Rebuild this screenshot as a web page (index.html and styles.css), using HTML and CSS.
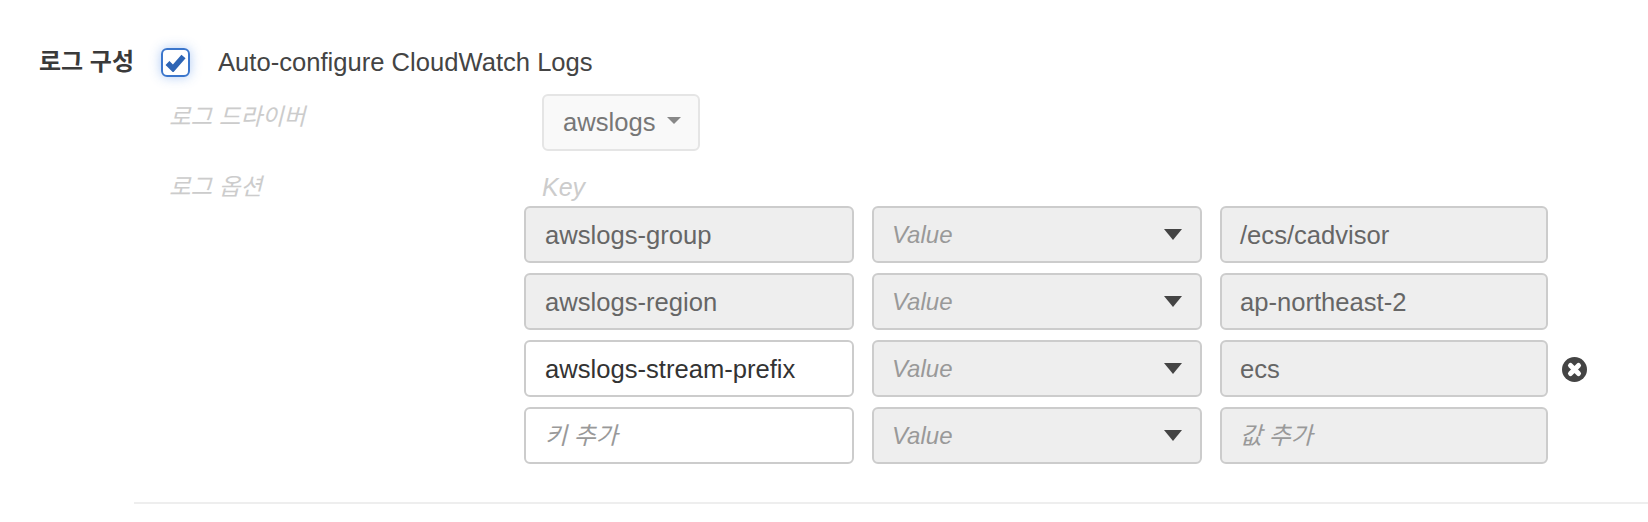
FILE: index.html
```html
<!DOCTYPE html>
<html lang="ko">
<head>
  <meta charset="UTF-8">
  <meta name="viewport" content="width=device-width, initial-scale=1.0">
  <title>로그 구성</title>
  <link rel="stylesheet" href="styles.css">
</head>
<body>
  <div class="log-config">
    <div class="section-label">로그 구성</div>
    <div class="section-body">
      <div class="auto-row">
        <span class="checkbox">
          <svg width="21" height="19" viewBox="0 0 21 19"><path d="M2.5 10 L8 15.5 L18.5 3.5" fill="none" stroke="#2e65b5" stroke-width="5.5"/></svg>
        </span>
        <span class="auto-text">Auto-configure CloudWatch Logs</span>
      </div>

      <div class="driver-row">
        <div class="sub-label">로그 드라이버</div>
        <div class="driver-select">awslogs <span class="driver-caret"></span></div>
      </div>

      <div class="options-head">
        <div class="sub-label">로그 옵션</div>
        <div class="key-head">Key</div>
      </div>

      <div class="options">
        <div class="option-row">
          <div class="field disabled">awslogs-group</div>
          <div class="field disabled select"><span class="hint">Value</span><span class="caret"></span></div>
          <div class="field disabled">/ecs/cadvisor</div>
        </div>
        <div class="option-row">
          <div class="field disabled">awslogs-region</div>
          <div class="field disabled select"><span class="hint">Value</span><span class="caret"></span></div>
          <div class="field disabled">ap-northeast-2</div>
        </div>
        <div class="option-row">
          <div class="field">awslogs-stream-prefix</div>
          <div class="field disabled select"><span class="hint">Value</span><span class="caret"></span></div>
          <div class="field disabled">ecs</div>
          <svg class="remove" width="25" height="25" viewBox="0 0 25 25"><circle cx="12.5" cy="12.5" r="12.5" fill="#444"/><path d="M8.5 8.5 L16.5 16.5 M16.5 8.5 L8.5 16.5" stroke="#fff" stroke-width="5" stroke-linecap="round"/></svg>
        </div>
        <div class="option-row">
          <div class="field"><span class="hint hint-ko">키 추가</span></div>
          <div class="field disabled select"><span class="hint">Value</span><span class="caret"></span></div>
          <div class="field disabled"><span class="hint hint-ko">값 추가</span></div>
        </div>
      </div>
    </div>
  </div>
  <div class="divider"></div>
</body>
</html>
```

FILE: styles.css
```css
body {
  font-family: "Liberation Sans", "Noto Sans CJK KR", sans-serif;
  font-size: 25.6px;
  color: #444;
  margin: 0;
  background: #fff;
}
.log-config {
  display: flex;
  padding: 47px 0 0 39px;
}
.section-label {
  width: 122px;
  font-size: 24px;
  font-weight: bold;
  line-height: 29px;
  color: #3a3a3a;
}
.section-body {
  flex: 1;
}
.auto-row {
  display: flex;
  align-items: center;
  gap: 28px;
  height: 30px;
}
.checkbox {
  width: 29px;
  height: 29px;
  box-sizing: border-box;
  border: 2px solid #3b76cc;
  border-radius: 6px;
  box-shadow: 0 0 12px rgba(80, 140, 230, 0.45);
  display: flex;
  align-items: center;
  justify-content: center;
}
.auto-text {
  color: #444;
}
.driver-row {
  display: flex;
  margin-top: 17px;
}
.sub-label {
  width: 373px;
  margin-left: 8px;
  font-size: 23.5px;
  font-style: italic;
  color: #ccc;
  line-height: 28px;
  padding-top: 2px;
}
.driver-row .sub-label {
  padding-top: 9px;
}
.driver-select {
  width: 158px;
  height: 57px;
  box-sizing: border-box;
  display: flex;
  align-items: center;
  padding-left: 19px;
  gap: 12px;
  background: #f9f9f9;
  border: 2px solid #e5e5e5;
  border-radius: 6px;
  color: #777;
}
.driver-caret {
  border-left: 7px solid transparent;
  border-right: 7px solid transparent;
  border-top: 7px solid #888;
  margin-bottom: 4px;
}
.options-head {
  display: flex;
  margin-top: 20px;
}
.key-head {
  font-size: 25px;
  font-style: italic;
  color: #ccc;
  line-height: 28px;
  padding-top: 2px;
}
.options {
  margin: 5px 0 0 363px;
  display: flex;
  flex-direction: column;
  gap: 10px;
}
.option-row {
  display: grid;
  grid-template-columns: 330px 330px 328px 27px;
  column-gap: 18px;
  align-items: center;
}
.field {
  height: 57px;
  box-sizing: border-box;
  display: flex;
  align-items: center;
  justify-content: space-between;
  padding: 1px 20px 0 18px;
  border: 2px solid #ccc;
  border-radius: 6px;
  background: #fff;
  color: #333;
}
.option-row .field:first-child {
  padding-left: 19px;
}
.field.disabled {
  background: #eee;
  color: #666;
}
.hint {
  font-size: 24px;
  font-style: italic;
  color: #999;
}
.hint-ko {
  margin-bottom: 5px;
}
.caret {
  border-left: 9px solid transparent;
  border-right: 9px solid transparent;
  border-top: 11px solid #444;
  margin: 0 -2px 2px 0;
}
.remove {
  margin: 1px 0 0 -4px;
}
.divider {
  height: 2px;
  background: #eee;
  margin: 38px 0 0 134px;
}
```
